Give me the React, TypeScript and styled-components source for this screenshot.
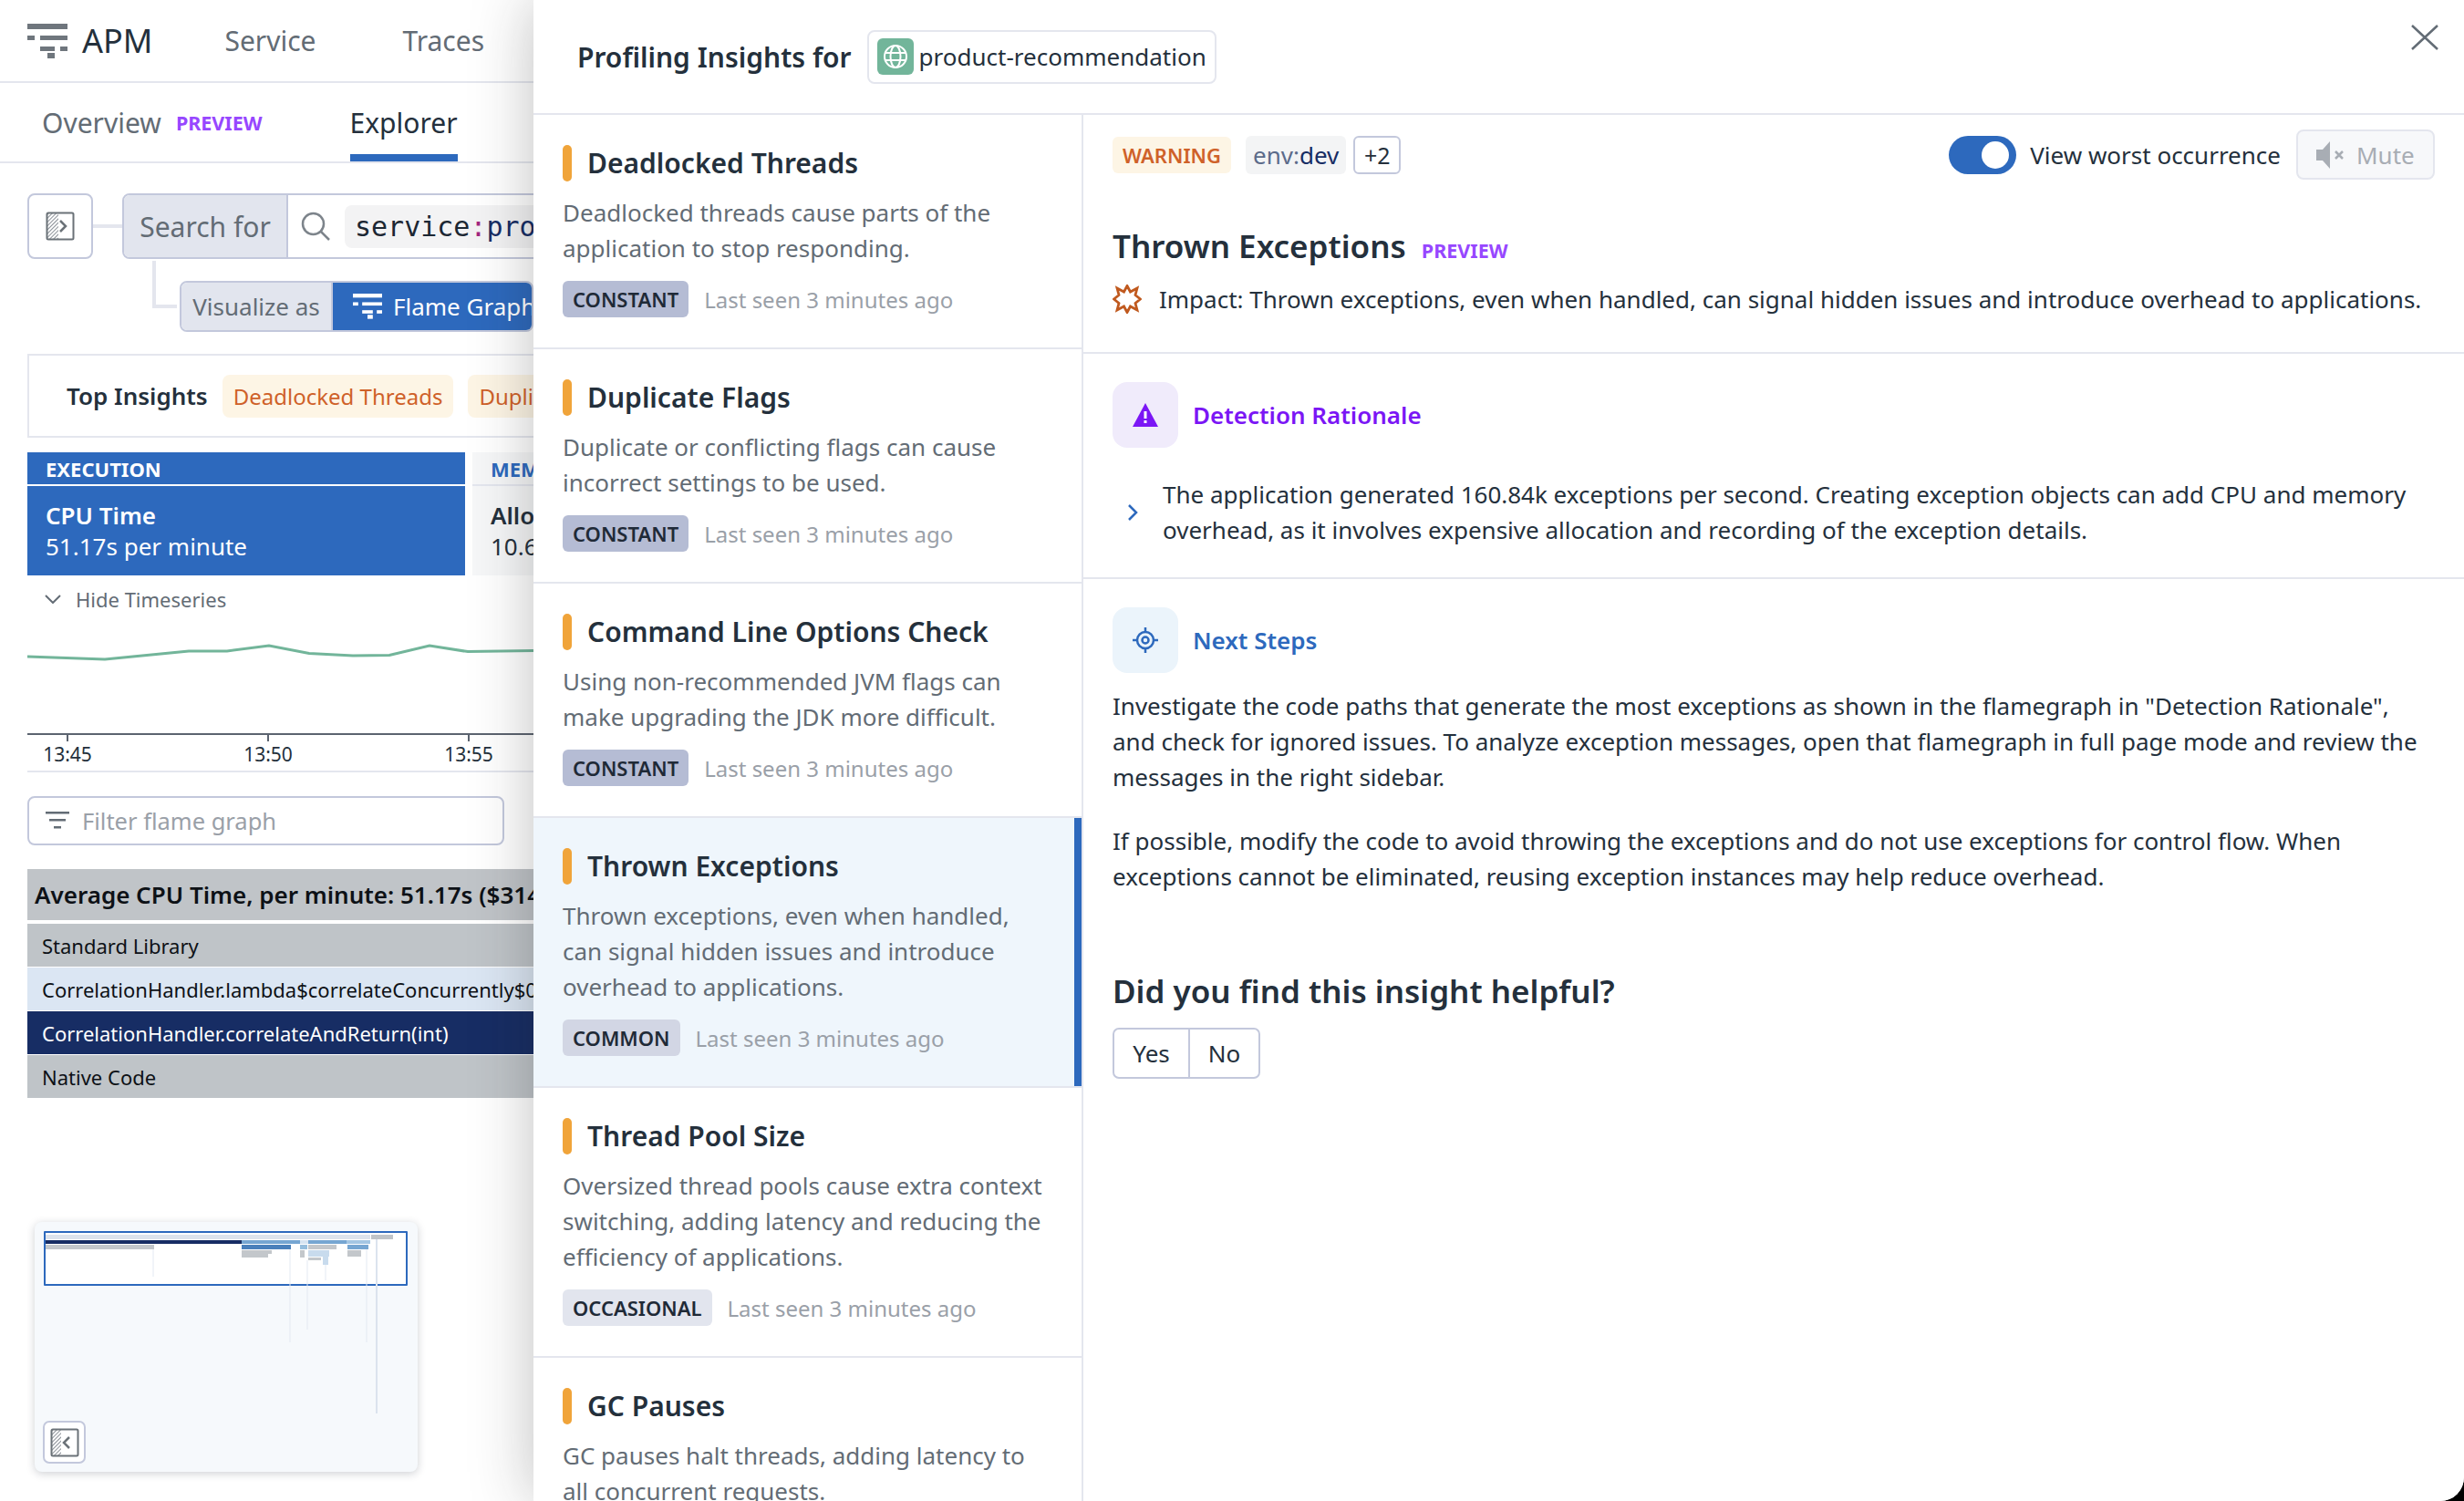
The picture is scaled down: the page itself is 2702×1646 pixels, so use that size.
import React from 'react';
import styled, { createGlobalStyle } from 'styled-components';

const GlobalStyle = createGlobalStyle`
  html, body { margin: 0; padding: 0; background: #000; }
  body { font-family: 'Noto Sans', 'Open Sans', sans-serif; color: #24303c; }
  * { box-sizing: border-box; }
  svg { flex: none; }
`;

const blue = '#2d69bd';
const line = '#e4e6ee';
const ctrl = '#c3c8dc';

const Screen = styled.div`
  width: 2702px;
  height: 1646px;
  display: flex;
  overflow: hidden;
  position: relative;
  background: #fff;
  border-bottom-right-radius: 26px;
`;

/* ---------- page behind the drawer ---------- */
const Page = styled.div`
  width: 585px;
  flex: none;
  overflow: hidden;
  display: flex;
  flex-direction: column;
`;

const TopNav = styled.div`
  height: 91px;
  flex: none;
  display: flex;
  align-items: center;
  padding-left: 30px;
  border-bottom: 2px solid ${line};
`;

const Brand = styled.span`
  font-size: 36px;
  margin-left: 16px;
  margin-right: 79px;
  color: #24303c;
`;

const NavLink = styled.span`
  font-size: 30px;
  color: #636c75;
  margin-right: 95px;
`;

const SubNav = styled.div`
  height: 88px;
  flex: none;
  display: flex;
  align-items: stretch;
  padding-left: 46px;
  border-bottom: 2px solid ${line};
`;

const SubTab = styled.div<{ $active?: boolean }>`
  display: flex;
  align-items: center;
  gap: 16px;
  font-size: 30px;
  color: ${(p) => (p.$active ? '#24303c' : '#636c75')};
  margin-right: ${(p) => (p.$active ? 0 : '96px')};
  border-bottom: 8px solid ${(p) => (p.$active ? blue : 'transparent')};
  padding-top: 8px;
`;

const PreviewTag = styled.span`
  font-size: 21.5px;
  font-weight: 700;
  color: #9747ff;
`;

const Filters = styled.div`
  padding: 33px 0 0 30px;
`;

const SearchRow = styled.div`
  display: flex;
  align-items: center;
`;

const SquareBtn = styled.div`
  width: 72px;
  height: 72px;
  flex: none;
  display: flex;
  align-items: center;
  justify-content: center;
  background: #fff;
  border: 2px solid ${ctrl};
  border-radius: 8px;
`;

const HLink = styled.div`
  width: 32px;
  height: 4px;
  background: ${line};
  flex: none;
`;

const Segmented = styled.div`
  display: flex;
  flex: none;
  width: 700px;
  height: 72px;
  border: 2px solid ${ctrl};
  border-radius: 8px;
  overflow: hidden;
`;

const SegLabel = styled.div<{ $size?: number; $w: number }>`
  width: ${(p) => p.$w}px;
  flex: none;
  display: flex;
  align-items: center;
  justify-content: center;
  background: #e2e5ee;
  border-right: 2px solid ${ctrl};
  font-size: ${(p) => p.$size ?? 30}px;
  color: #636c75;
`;

const SearchBody = styled.div`
  display: flex;
  align-items: center;
  gap: 16px;
  padding-left: 14px;
  flex: 1;
`;

const QueryChip = styled.div`
  height: 47px;
  padding: 0 11px;
  display: flex;
  align-items: center;
  flex: none;
  white-space: pre;
  background: #f3f3f4;
  border-radius: 8px;
  font-family: 'DejaVu Sans Mono', 'Liberation Mono', monospace;
  font-size: 30px;
  color: #1c2733;
`;

const Colon = styled.span`
  color: #a3267f;
`;

const Navy = styled.span`
  color: #172d64;
`;

const VisualRow = styled.div`
  display: flex;
  margin-top: 24px;
  padding-left: 137px;
  position: relative;
`;

const Elbow = styled.div`
  position: absolute;
  left: 137px;
  top: -22px;
  width: 27px;
  height: 52px;
  border-left: 4px solid ${line};
  border-bottom: 4px solid ${line};
`;

const VisualGroup = styled.div`
  display: flex;
  margin-left: 30px;
  width: 600px;
  height: 56px;
  border: 2px solid ${ctrl};
  border-radius: 8px;
  overflow: hidden;
`;

const VisualActive = styled.div`
  flex: 1;
  display: flex;
  align-items: center;
  gap: 12px;
  padding-left: 22px;
  background: ${blue};
  color: #fff;
  font-size: 26px;
  white-space: nowrap;
`;

const InsightsBox = styled.div`
  margin: 24px 0 0 30px;
  width: 800px;
  height: 92px;
  flex: none;
  display: flex;
  align-items: center;
  padding-left: 41px;
  border: 2px solid ${line};
`;

const InsightsTitle = styled.span`
  font-size: 26px;
  font-weight: 600;
  margin-right: 16px;
`;

const InsightPill = styled.span`
  height: 47px;
  padding: 0 12px;
  margin-right: 16px;
  display: flex;
  align-items: center;
  border-radius: 8px;
  background: #fdf5e5;
  color: #cf6129;
  font-size: 24px;
  white-space: nowrap;
`;

const Metrics = styled.div`
  margin: 16px 0 0 30px;
  display: flex;
  gap: 8px;
  flex: none;
  width: 800px;
`;

const Metric = styled.div<{ $on?: boolean }>`
  width: 480px;
  flex: none;
  background: ${(p) => (p.$on ? blue : '#f6f7f8')};
  color: ${(p) => (p.$on ? '#fff' : '#24303c')};
`;

const MetricHead = styled.div<{ $on?: boolean }>`
  height: 37px;
  padding-left: 20px;
  display: flex;
  align-items: center;
  font-size: 22px;
  font-weight: 700;
  color: ${(p) => (p.$on ? '#fff' : blue)};
  border-bottom: 2px solid ${(p) => (p.$on ? '#fff' : line)};
`;

const MetricBody = styled.div`
  height: 98px;
  padding: 15px 0 0 20px;
  font-size: 26px;
  line-height: 34px;
`;

const MetricName = styled.div`
  font-weight: 600;
`;

const TimeToggle = styled.div`
  margin: 13px 0 0 49px;
  height: 26px;
  display: flex;
  align-items: center;
  gap: 16px;
  font-size: 22px;
  color: #636c75;
`;

const ChartWrap = styled.div`
  margin: 13px 0 0 30px;
  height: 164px;
  flex: none;
  border-bottom: 2px solid ${line};
  position: relative;
`;

const Tick = styled.span<{ $x: number }>`
  position: absolute;
  left: ${(p) => p.$x}px;
  top: 130px;
  transform: translateX(-50%);
  font-size: 21px;
  color: #24303c;
`;

const FilterBox = styled.div`
  margin: 26px 0 0 30px;
  width: 523px;
  height: 54px;
  flex: none;
  display: flex;
  align-items: center;
  gap: 14px;
  padding-left: 18px;
  border: 2px solid ${ctrl};
  border-radius: 8px;
  font-size: 25.5px;
  color: #9aa0a8;
`;

const Flame = styled.div`
  margin: 26px 0 0 30px;
  width: 800px;
  flex: none;
`;

const FlameHead = styled.div`
  height: 56px;
  padding-left: 8px;
  margin-bottom: 4px;
  display: flex;
  align-items: center;
  background: #c0c4c8;
  color: #0d1116;
  font-size: 26px;
  font-weight: 600;
  white-space: nowrap;
`;

const FlameRow = styled.div<{ $bg: string; $fg: string }>`
  height: 48px;
  padding-left: 16px;
  display: flex;
  align-items: center;
  border-bottom: 1px solid #fff;
  background: ${(p) => p.$bg};
  color: ${(p) => p.$fg};
  font-size: 22px;
  white-space: nowrap;
`;

const MiniMap = styled.div`
  position: absolute;
  left: 38px;
  top: 1340px;
  width: 420px;
  height: 274px;
  background: #f6f9fc;
  border-radius: 8px;
  box-shadow: 0 2px 10px rgba(30, 40, 60, 0.22);
  padding: 10px;
`;

const MiniViewport = styled.div`
  width: 399px;
  height: 60px;
  background: #fff;
  border: 2px solid ${blue};
  border-radius: 1px;
`;

const MiniBtn = styled.div`
  position: absolute;
  left: 9px;
  bottom: 9px;
  width: 47px;
  height: 47px;
  display: flex;
  align-items: center;
  justify-content: center;
  background: #fff;
  border: 2px solid ${ctrl};
  border-radius: 7px;
`;

/* ---------- insights drawer ---------- */
const Drawer = styled.div`
  position: relative;
  z-index: 2;
  flex: 1;
  min-width: 0;
  display: flex;
  flex-direction: column;
  background: #fff;
  box-shadow: 0 0 64px rgba(30, 30, 30, 0.28);
`;

const DrawerHead = styled.div`
  height: 126px;
  flex: none;
  display: flex;
  align-items: center;
  padding: 0 28px 0 48px;
  border-bottom: 2px solid ${line};
`;

const DrawerTitle = styled.h1`
  margin: 0 17px 0 0;
  font-size: 30px;
  font-weight: 600;
`;

const ServiceChip = styled.div`
  height: 59px;
  padding: 0 9px;
  display: flex;
  align-items: center;
  gap: 6px;
  border: 2px solid ${line};
  border-radius: 8px;
  font-size: 26px;
`;

const ServiceIcon = styled.div`
  width: 40px;
  height: 40px;
  display: flex;
  align-items: center;
  justify-content: center;
  border-radius: 6px;
  background: #72b59a;
`;

const CloseBtn = styled.div`
  margin-left: auto;
  align-self: flex-start;
  margin-top: 27px;
  display: flex;
`;

const DrawerBody = styled.div`
  flex: 1;
  min-height: 0;
  display: flex;
`;

const InsightList = styled.div`
  width: 603px;
  flex: none;
  overflow: hidden;
  border-right: 2px solid ${line};
`;

const InsightItem = styled.div<{ $selected?: boolean; $tall?: boolean }>`
  padding: 33px 36px 0 32px;
  height: ${(p) => (p.$tall ? 296 : 257)}px;
  border-bottom: 2px solid ${line};
  position: relative;
  background: ${(p) => (p.$selected ? '#eff6fc' : '#fff')};
  &:last-child {
    border-bottom: none;
  }
`;

const SelectedEdge = styled.div`
  position: absolute;
  top: 0;
  right: 0;
  bottom: 0;
  width: 8px;
  background: ${blue};
`;

const ItemTitle = styled.div`
  display: flex;
  align-items: center;
  gap: 17px;
  font-size: 30px;
  font-weight: 600;
  line-height: 40px;
`;

const SeverityBar = styled.span`
  width: 10px;
  height: 40px;
  border-radius: 5px;
  background: #f0a43a;
`;

const ItemText = styled.p`
  margin: 15px 0 0;
  font-size: 26px;
  line-height: 39px;
  color: #636c75;
`;

const ItemMeta = styled.div`
  margin-top: 16px;
  display: flex;
  align-items: center;
  gap: 17px;
  font-size: 24px;
  color: #9aa0a8;
`;

const FreqBadge = styled.span<{ $bg: string }>`
  height: 40px;
  padding: 0 11px;
  display: flex;
  align-items: center;
  border-radius: 6px;
  background: ${(p) => p.$bg};
  color: #1f2a37;
  font-size: 22px;
  font-weight: 600;
`;

const Detail = styled.div`
  flex: 1;
  min-width: 0;
`;

const DetailTop = styled.div`
  height: 262px;
  padding: 16px 32px 0 32px;
  border-bottom: 2px solid ${line};
`;

const TagRow = styled.div`
  display: flex;
  align-items: center;
  height: 55px;
`;

const WarnTag = styled.span`
  height: 40px;
  padding: 0 11px;
  display: flex;
  align-items: center;
  border-radius: 6px;
  background: #fdf5e5;
  color: #cf6129;
  font-size: 22px;
  font-weight: 600;
  margin-right: 16px;
`;

const EnvTag = styled.span`
  height: 42px;
  padding: 0 8px;
  display: flex;
  align-items: center;
  border-radius: 6px;
  background: #f3f4f5;
  color: #5c6b8a;
  font-size: 26px;
  margin-right: 8px;
`;

const MoreTag = styled.span`
  height: 42px;
  width: 52px;
  display: flex;
  align-items: center;
  justify-content: center;
  border: 2px solid ${ctrl};
  border-radius: 6px;
  font-size: 25px;
`;

const Toggle = styled.span`
  margin-left: auto;
  width: 74px;
  height: 42px;
  padding: 6px 8px 6px 0;
  display: flex;
  justify-content: flex-end;
  border-radius: 21px;
  background: ${blue};
`;

const ToggleKnob = styled.span`
  width: 30px;
  height: 30px;
  border-radius: 50%;
  background: #fff;
`;

const ToggleLabel = styled.span`
  margin: 0 17px 0 15px;
  font-size: 26px;
  white-space: nowrap;
`;

const MuteBtn = styled.div`
  width: 152px;
  height: 55px;
  flex: none;
  display: flex;
  align-items: center;
  gap: 12px;
  padding-left: 20px;
  background: #f7f8fa;
  border: 2px solid ${line};
  border-radius: 8px;
  font-size: 26px;
  color: #a8adb4;
`;

const DetailTitle = styled.div`
  display: flex;
  align-items: baseline;
  gap: 17px;
  margin-top: 46px;
  font-size: 35px;
  font-weight: 600;
  line-height: 54px;
`;

const ImpactRow = styled.div`
  display: flex;
  align-items: center;
  gap: 19px;
  margin-top: 6px;
  font-size: 26px;
  line-height: 40px;
  white-space: nowrap;
`;

const Section = styled.div<{ $rule?: boolean }>`
  padding: 31px 32px 0 32px;
  height: ${(p) => (p.$rule ? '247px' : 'auto')};
  border-bottom: ${(p) => (p.$rule ? `2px solid ${line}` : 'none')};
`;

const SectionHead = styled.div<{ $color: string }>`
  display: flex;
  align-items: center;
  gap: 16px;
  font-size: 26px;
  font-weight: 600;
  color: ${(p) => p.$color};
`;

const SectionIcon = styled.div<{ $bg: string }>`
  width: 72px;
  height: 72px;
  display: flex;
  align-items: center;
  justify-content: center;
  border-radius: 16px;
  background: ${(p) => p.$bg};
`;

const Rationale = styled.div`
  display: flex;
  align-items: center;
  gap: 27px;
  margin: 32px 0 0 16px;
  font-size: 26px;
  line-height: 39px;
`;

const Para = styled.p`
  margin: 17px 0 31px;
  font-size: 26px;
  line-height: 39px;
`;

const Helpful = styled.div`
  margin-top: 81px;
  font-size: 35px;
  font-weight: 600;
  line-height: 50px;
`;

const FeedbackGroup = styled.div`
  display: inline-flex;
  margin-top: 15px;
  height: 56px;
  border: 2px solid ${ctrl};
  border-radius: 7px;
  overflow: hidden;
`;

const FeedbackBtn = styled.span<{ $w: number }>`
  width: ${(p) => p.$w}px;
  display: flex;
  align-items: center;
  justify-content: center;
  font-size: 26px;
  & + & {
    border-left: 2px solid ${ctrl};
  }
`;

const FlameIcon = ({ color, size }: { color: string; size: number }) => (
  <svg width={size} height={(size * 38) / 44} viewBox="0 0 44 38" fill={color}>
    <rect x="0" y="0" width="44" height="6" />
    <rect x="0" y="13" width="8" height="5" />
    <rect x="14" y="13" width="30" height="5" />
    <rect x="14" y="25" width="16" height="5" />
    <rect x="36" y="25" width="8" height="5" />
    <rect x="22" y="32" width="8" height="6" />
  </svg>
);

const PaneIcon = ({ flip }: { flip?: boolean }) => (
  <svg width="32" height="32" viewBox="0 0 32 32" fill="none">
    <defs>
      <pattern id={flip ? 'hatchL' : 'hatchR'} width="3" height="3" patternUnits="userSpaceOnUse" patternTransform="rotate(45)">
        <rect width="1" height="3" fill="#8a9097" />
      </pattern>
    </defs>
    <rect x="2" y="2" width={flip ? 10 : 12} height="28" fill={`url(#${flip ? 'hatchL' : 'hatchR'})`} />
    <rect x="1.5" y="1.5" width="29" height="29" rx="1.5" stroke="#6b7278" strokeWidth="2" />
    <path d={flip ? 'M21 10l-6 6 6 6' : 'M16 10l6 6-6 6'} stroke="#6b7278" strokeWidth="2.5" />
  </svg>
);

const MiniFlame = () => (
  <svg width="396" height="56" viewBox="0 0 396 56" style={{ display: 'block', overflow: 'visible' }}>
    <rect x="0" y="2" width="356" height="5" fill="#dde3ec" />
    <rect x="357" y="2" width="24" height="5" fill="#c0c4c8" />
    <rect x="0" y="8" width="215" height="4" fill="#172d64" />
    <rect x="215" y="8" width="64" height="4" fill="#76a6d2" />
    <rect x="279" y="8" width="9" height="4" fill="#d6e4f1" />
    <rect x="288" y="8" width="42" height="4" fill="#76a6d2" />
    <rect x="330" y="8" width="26" height="4" fill="#a4c6e3" />
    <rect x="0" y="13" width="119" height="5" fill="#c3c7cb" />
    <rect x="215" y="13" width="54" height="5" fill="#4a80bb" />
    <rect x="279" y="13" width="8" height="5" fill="#96bedd" />
    <rect x="288" y="13" width="31" height="5" fill="#c3c7cb" />
    <rect x="331" y="13" width="23" height="5" fill="#76a6d2" />
    <rect x="215" y="19" width="33" height="4" fill="#c3c7cb" />
    <rect x="279" y="19" width="5" height="8" fill="#c3c7cb" />
    <rect x="288" y="19" width="23" height="7" fill="#c8dbed" />
    <rect x="331" y="19" width="15" height="7" fill="#c3c7cb" />
    <rect x="215" y="23" width="29" height="4" fill="#c3c7cb" />
    <rect x="288" y="27" width="14" height="3" fill="#c3c7cb" />
    <rect x="304" y="26" width="6" height="9" fill="#c8dbed" />
    <path d="M118 18V48M268 18V120M287 30V106M307 35V52M352 18V120" stroke="#e3e9f2" strokeWidth="1" />
    <path d="M363 7V198" stroke="#dbe3ee" strokeWidth="2" />
  </svg>
);

const insights = [
  { title: 'Deadlocked Threads', text: 'Deadlocked threads cause parts of the application to stop responding.', freq: 'CONSTANT', badge: '#b5bcd4' },
  { title: 'Duplicate Flags', text: 'Duplicate or conflicting flags can cause incorrect settings to be used.', freq: 'CONSTANT', badge: '#b5bcd4' },
  { title: 'Command Line Options Check', text: 'Using non-recommended JVM flags can make upgrading the JDK more difficult.', freq: 'CONSTANT', badge: '#b5bcd4' },
  { title: 'Thrown Exceptions', text: 'Thrown exceptions, even when handled, can signal hidden issues and introduce overhead to applications.', freq: 'COMMON', badge: '#d2d6e4', selected: true, tall: true },
  { title: 'Thread Pool Size', text: 'Oversized thread pools cause extra context switching, adding latency and reducing the efficiency of applications.', freq: 'OCCASIONAL', badge: '#e2e5ee', tall: true },
  { title: 'GC Pauses', text: 'GC pauses halt threads, adding latency to all concurrent requests.', freq: 'CONSTANT', badge: '#b5bcd4' },
];

const App: React.FC = () => (
  <Screen>
    <GlobalStyle />
    <Page>
      <TopNav>
        <FlameIcon color="#6f767d" size={44} />
        <Brand>APM</Brand>
        <NavLink>Service</NavLink>
        <NavLink>Traces</NavLink>
      </TopNav>
      <SubNav>
        <SubTab>
          Overview <PreviewTag>PREVIEW</PreviewTag>
        </SubTab>
        <SubTab $active>Explorer</SubTab>
      </SubNav>
      <Filters>
        <SearchRow>
          <SquareBtn>
            <PaneIcon />
          </SquareBtn>
          <HLink />
          <Segmented>
            <SegLabel $w={180}>Search for</SegLabel>
            <SearchBody>
              <svg width="32" height="32" viewBox="0 0 32 32" fill="none" stroke="#7d848b" strokeWidth="2.5">
                <circle cx="13.5" cy="13.5" r="11.5" />
                <path d="M22 22l9 9" />
              </svg>
              <QueryChip>
                service<Colon>:</Colon>
                <Navy>product-recommendation</Navy>
              </QueryChip>
            </SearchBody>
          </Segmented>
        </SearchRow>
        <VisualRow>
          <Elbow />
          <VisualGroup>
            <SegLabel $w={166} $size={26}>
              Visualize as
            </SegLabel>
            <VisualActive>
              <FlameIcon color="#fff" size={32} />
              Flame Graph
            </VisualActive>
          </VisualGroup>
        </VisualRow>
      </Filters>
      <InsightsBox>
        <InsightsTitle>Top Insights</InsightsTitle>
        <InsightPill>Deadlocked Threads</InsightPill>
        <InsightPill>Duplicate Flags</InsightPill>
      </InsightsBox>
      <Metrics>
        <Metric $on>
          <MetricHead $on>EXECUTION</MetricHead>
          <MetricBody>
            <MetricName>CPU Time</MetricName>
            51.17s per minute
          </MetricBody>
        </Metric>
        <Metric>
          <MetricHead>MEMORY</MetricHead>
          <MetricBody>
            <MetricName>Allocations</MetricName>
            10.65 GB
          </MetricBody>
        </Metric>
      </Metrics>
      <TimeToggle>
        <svg width="18" height="10" viewBox="0 0 18 10" fill="none" stroke="#636c75" strokeWidth="2">
          <path d="M1 1l8 8 8-8" />
        </svg>
        Hide Timeseries
      </TimeToggle>
      <ChartWrap>
        <svg width="555" height="132" viewBox="0 0 555 132" style={{ display: 'block' }}>
          <polyline
            points="0,37 85,40 177,31 219,31 265,25 309,33.5 357,36 397,35.5 441,25 483,31.6 555,30.6"
            fill="none"
            stroke="#72b59a"
            strokeWidth="3"
          />
          <path d="M0 122H555" stroke="#5c6470" strokeWidth="2" />
          <path d="M44 122v8M264 122v8M484 122v8" stroke="#5c6470" strokeWidth="2" />
        </svg>
        <Tick $x={44}>13:45</Tick>
        <Tick $x={264}>13:50</Tick>
        <Tick $x={484}>13:55</Tick>
      </ChartWrap>
      <FilterBox>
        <svg width="26" height="20" viewBox="0 0 26 20" fill="#636c75">
          <rect width="26" height="2.5" />
          <rect x="4" y="8" width="18" height="2.5" />
          <rect x="9" y="16" width="8" height="2.5" />
        </svg>
        Filter flame graph
      </FilterBox>
      <Flame>
        <FlameHead>Average CPU Time, per minute: 51.17s ($314.00)</FlameHead>
        <FlameRow $bg="#bfc4c8" $fg="#0d1116">Standard Library</FlameRow>
        <FlameRow $bg="#dbe6f3" $fg="#0d1116">CorrelationHandler.lambda$correlateConcurrently$0</FlameRow>
        <FlameRow $bg="#172d64" $fg="#fff">CorrelationHandler.correlateAndReturn(int)</FlameRow>
        <FlameRow $bg="#bfc4c8" $fg="#0d1116">Native Code</FlameRow>
      </Flame>
      <MiniMap>
        <MiniViewport>
          <MiniFlame />
        </MiniViewport>
        <MiniBtn>
          <PaneIcon flip />
        </MiniBtn>
      </MiniMap>
    </Page>

    <Drawer>
      <DrawerHead>
        <DrawerTitle>Profiling Insights for</DrawerTitle>
        <ServiceChip>
          <ServiceIcon>
            <svg width="30" height="30" viewBox="0 0 30 30" fill="none" stroke="#fff" strokeWidth="2">
              <circle cx="15" cy="15" r="12" />
              <ellipse cx="15" cy="15" rx="5.5" ry="12" />
              <path d="M3 11h24M3 19h24" />
            </svg>
          </ServiceIcon>
          product-recommendation
        </ServiceChip>
        <CloseBtn>
          <svg width="30" height="28" viewBox="0 0 30 28" fill="none" stroke="#636c75" strokeWidth="2.5">
            <path d="M1 1l28 26M29 1L1 27" />
          </svg>
        </CloseBtn>
      </DrawerHead>
      <DrawerBody>
        <InsightList>
          {insights.map((i) => (
            <InsightItem key={i.title} $selected={i.selected} $tall={i.tall}>
              {i.selected && <SelectedEdge />}
              <ItemTitle>
                <SeverityBar />
                {i.title}
              </ItemTitle>
              <ItemText>{i.text}</ItemText>
              <ItemMeta>
                <FreqBadge $bg={i.badge}>{i.freq}</FreqBadge>
                Last seen 3 minutes ago
              </ItemMeta>
            </InsightItem>
          ))}
        </InsightList>
        <Detail>
          <DetailTop>
            <TagRow>
              <WarnTag>WARNING</WarnTag>
              <EnvTag>
                env:<Navy>dev</Navy>
              </EnvTag>
              <MoreTag>+2</MoreTag>
              <Toggle>
                <ToggleKnob />
              </Toggle>
              <ToggleLabel>View worst occurrence</ToggleLabel>
              <MuteBtn>
                <svg width="32" height="30" viewBox="0 0 32 30" fill="#a8adb4">
                  <path d="M0 9h7l8-9v30l-8-9H0z" />
                  <path d="M21 11l8 8M29 11l-8 8" stroke="#a8adb4" strokeWidth="2.5" fill="none" />
                </svg>
                Mute
              </MuteBtn>
            </TagRow>
            <DetailTitle>
              Thrown Exceptions <PreviewTag>PREVIEW</PreviewTag>
            </DetailTitle>
            <ImpactRow>
              <svg width="32" height="32" viewBox="0 0 32 32" fill="none" stroke="#c0591e" strokeWidth="2.8" strokeLinejoin="miter">
                <path d="M16 1.5L19.5 8 27 4l-2 7.5L30.5 16 25 20.5 27 28l-7.5-4L16 30.5 12.5 24 5 28l2-7.5L1.5 16 7 11.5 5 4l7.5 4z" />
              </svg>
              Impact: Thrown exceptions, even when handled, can signal hidden issues and introduce overhead to applications.
            </ImpactRow>
          </DetailTop>
          <Section $rule>
            <SectionHead $color="#7b16f5">
              <SectionIcon $bg="#f0ebfb">
                <svg width="28" height="26" viewBox="0 0 28 26">
                  <path d="M14 0L28 26H0z" fill="#7b16f5" />
                  <rect x="12.5" y="9" width="3" height="8" fill="#fff" />
                  <rect x="12.5" y="19" width="3" height="3" fill="#fff" />
                </svg>
              </SectionIcon>
              Detection Rationale
            </SectionHead>
            <Rationale>
              <svg width="12" height="20" viewBox="0 0 12 20" fill="none" stroke={blue} strokeWidth="2.5">
                <path d="M2 2l8 8-8 8" />
              </svg>
              <span>
                The application generated 160.84k exceptions per second. Creating exception objects can add CPU and memory overhead, as it involves expensive allocation and recording of the exception details.
              </span>
            </Rationale>
          </Section>
          <Section>
            <SectionHead $color={blue}>
              <SectionIcon $bg="#ebf4fb">
                <svg width="28" height="28" viewBox="0 0 28 28" fill="none" stroke={blue} strokeWidth="2.5">
                  <circle cx="14" cy="14" r="9" />
                  <circle cx="14" cy="14" r="3.5" />
                  <path d="M14 0v5M14 23v5M0 14h5M23 14h5" />
                </svg>
              </SectionIcon>
              Next Steps
            </SectionHead>
            <Para>
              Investigate the code paths that generate the most exceptions as shown in the flamegraph in "Detection Rationale", and check for ignored issues. To analyze exception messages, open that flamegraph in full page mode and review the messages in the right sidebar.
            </Para>
            <Para>
              If possible, modify the code to avoid throwing the exceptions and do not use exceptions for control flow. When exceptions cannot be eliminated, reusing exception instances may help reduce overhead.
            </Para>
            <Helpful>Did you find this insight helpful?</Helpful>
            <FeedbackGroup>
              <FeedbackBtn $w={81}>Yes</FeedbackBtn>
              <FeedbackBtn $w={77}>No</FeedbackBtn>
            </FeedbackGroup>
          </Section>
        </Detail>
      </DrawerBody>
    </Drawer>
  </Screen>
);

export default App;
